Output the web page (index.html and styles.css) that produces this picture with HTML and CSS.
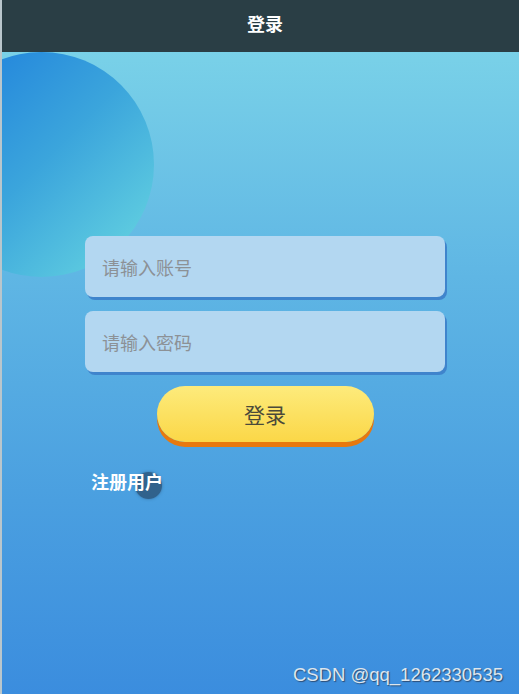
FILE: index.html
```html
<!DOCTYPE html>
<html lang="zh-CN">
<head>
  <meta charset="UTF-8" />
  <title>登录</title>
  <link rel="stylesheet" href="styles.css">
</head>
<body>

  <!-- 🔹 Title bar -->
  <header>登录</header>

  <!-- 🔹 Login form -->
  <main>
    <div class="bubble"></div>

    <div class="login-box">
      <input type="text" placeholder="请输入账号" />
      <input type="password" placeholder="请输入密码" />
      <button class="login-btn">登录</button>
      <a class="register" href="#">注册用户<span class="touch"></span></a>
    </div>

    <div class="watermark">CSDN @qq_1262330535</div>
  </main>

</body>
</html>
```

FILE: styles.css
```css
* {
  margin: 0;
  padding: 0;
  box-sizing: border-box;
}

body {
  font-family: "Noto Sans CJK SC", "Liberation Sans", sans-serif;
  height: 694px;
  display: flex;
  flex-direction: column;
  overflow: hidden;
  border-left: 2px solid #b9c6cc;
}

header {
  height: 52px;
  background-color: #2a3e45;
  color: white;
  font-size: 18px;
  font-weight: bold;
  display: flex;
  justify-content: center;
  align-items: center;
  padding-bottom: 6px;
  padding-left: 9px;
}

main {
  flex: 1;
  position: relative;
  background: linear-gradient(to bottom, #79d1e8 0%, #5fb6e4 35%, #4a9fe0 70%, #3b8dde 100%);
}

.bubble {
  position: absolute;
  left: -73px;
  top: 0;
  width: 225px;
  height: 225px;
  border-radius: 50%;
  background: linear-gradient(135deg, #1c7cdc 0%, #3ba5dc 50%, #6ad9e1 100%);
}

.login-box {
  position: relative;
  margin-left: 83px;
  margin-top: 184px;
  width: 360px;
  display: flex;
  flex-direction: column;
  gap: 14px;
}

input {
  height: 61px;
  border: none;
  border-radius: 8px;
  background-color: #b3d7f1;
  box-shadow: 2px 3px 0 #3f84cc;
  padding: 0 17px;
  font-size: 18px;
  font-family: inherit;
  outline: none;
}

input::placeholder {
  color: #8c9196;
}

.login-btn {
  align-self: center;
  width: 217px;
  height: 56px;
  margin-bottom: 5px;
  border: none;
  border-radius: 28px;
  background: linear-gradient(to bottom, #fdeb7c, #fbd747);
  box-shadow: 0 5px 0 #e8790e;
  color: #4a4a3a;
  font-size: 21px;
  font-family: inherit;
  cursor: pointer;
}

.register {
  position: relative;
  z-index: 0;
  align-self: flex-start;
  margin-left: 6px;
  margin-top: 7px;
  color: white;
  font-size: 18px;
  font-weight: bold;
  text-decoration: none;
}

.touch {
  position: absolute;
  z-index: -1;
  left: 44px;
  top: 4px;
  width: 27px;
  height: 27px;
  border-radius: 50%;
  background: rgba(35, 65, 95, 0.65);
  box-shadow: 0 0 3px rgba(35, 65, 95, 0.5);
}

.watermark {
  position: absolute;
  right: 16px;
  bottom: 8px;
  color: #dde6ee;
  font-family: "Liberation Sans", sans-serif;
  font-size: 18.5px;
  text-shadow: 1px 1px 1px rgba(40, 60, 90, 0.8);
}
```
